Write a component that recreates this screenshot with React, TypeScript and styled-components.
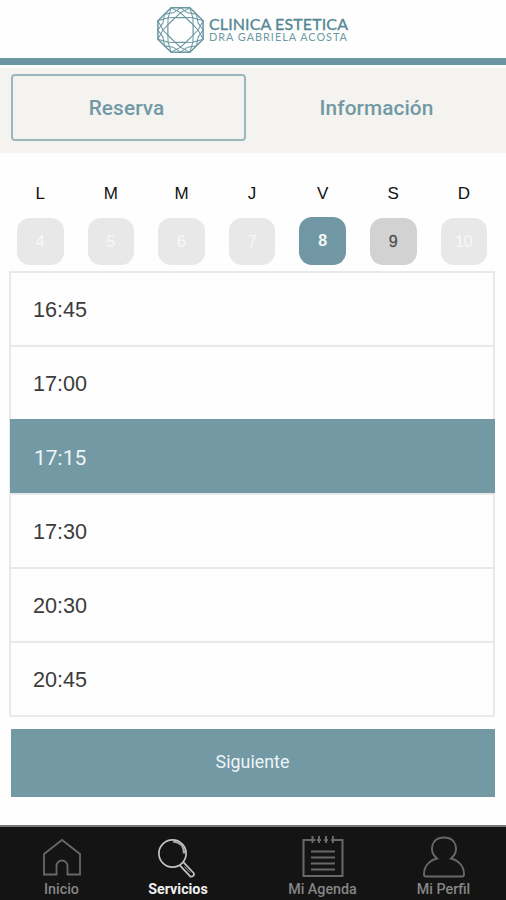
import React from 'react';
import styled, { createGlobalStyle, css } from 'styled-components';

const teal = '#7399a5';

const GlobalStyle = createGlobalStyle`
  * { box-sizing: border-box; }
  body { margin: 0; background: #fefefe; font-family: Roboto, "Liberation Sans", sans-serif; }
  button { font: inherit; padding: 0; border: 0; background: none; }
`;

const Screen = styled.div`
  width: 506px;
  height: 900px;
  display: flex;
  flex-direction: column;
  overflow: hidden;
`;

const Header = styled.header`
  height: 65px;
  flex: none;
  display: flex;
  align-items: flex-start;
  padding: 5px 0 0 155px;
  border-bottom: 7px solid #6c95a2;
  background: #fefefe;
`;

const Brand = styled.div`
  display: flex;
  flex-direction: column;
  padding: 11px 0 0 3px;
  font-family: Lato, sans-serif;
  color: #548895;
`;

const BrandName = styled.span`
  font-size: 16px;
  line-height: 16px;
  letter-spacing: 0.12px;
  -webkit-text-stroke: 0.35px;
  white-space: nowrap;
`;

const BrandOwner = styled.span`
  font-size: 10.9px;
  line-height: 9px;
  letter-spacing: 0.98px;
  white-space: nowrap;
  color: #6d99a4;
`;

const Tabs = styled.nav`
  height: 85px;
  flex: none;
  margin-top: 3px;
  padding: 6px 12px 12px 11px;
  display: grid;
  grid-template-columns: 235px 1fr;
  column-gap: 13px;
  background: #f4f3ef;
`;

const Tab = styled.button<{ $active?: boolean }>`
  border: 2px solid ${(p) => (p.$active ? '#9cb6bd' : 'transparent')};
  border-radius: 4px;
  color: #7199a5;
  font-size: 20.8px;
  font-weight: 500;
  letter-spacing: 0.1px;
  padding: 1px ${(p) => (p.$active ? 4 : 0)}px 0 0;
`;

const Week = styled.section`
  height: 118px;
  flex: none;
  display: grid;
  grid-template-columns: repeat(7, 70.6px);
  justify-items: center;
  align-content: start;
  padding: 29px 0 0 5px;
`;

const DayColumn = styled.div`
  display: flex;
  flex-direction: column;
  align-items: center;
`;

const DayLetter = styled.span`
  height: 24px;
  line-height: 24px;
  font-family: "Liberation Sans", sans-serif;
  font-size: 17px;
  color: #111;
`;

type DayState = 'disabled' | 'selected' | 'open';

const dayStyles = {
  disabled: css`background: #e8e8e8; color: #f8f8f8;`,
  open: css`background: #d2d2d2; color: #505050; -webkit-text-stroke: 0.3px;`,
  selected: css`
    background: #7097a3;
    color: #f1f7f9;
    height: 48px;
    margin-top: 11px;
    padding-bottom: 1px;
    font-weight: 700;
  `,
};

const DayTile = styled.button<{ $state: DayState }>`
  width: 46.5px;
  height: 46.5px;
  margin-top: 12px;
  padding-top: 1px;
  border-radius: 13px;
  font-family: "Liberation Sans", sans-serif;
  font-size: 16px;
  ${(p) => dayStyles[p.$state]}
`;

const Slots = styled.ul`
  list-style: none;
  margin: 0 11px 0 9px;
  padding: 0;
  flex: none;
  border-top: 2px solid #e9e9e9;
`;

const Slot = styled.li<{ $selected?: boolean }>`
  height: 74px;
  display: flex;
  align-items: center;
  padding: 2px 0 0 22px;
  border: 2px solid #e9e9e9;
  border-top: 0;
  color: #3c3c3c;
  font-family: "Liberation Sans", sans-serif;
  font-size: 21.6px;
  ${(p) =>
    p.$selected &&
    css`
      height: 76px;
      margin-top: -2px;
      border: 0;
      border-left: 1px solid #e9e9e9;
      border-bottom: 2px solid #e9e9e9;
      background: ${teal};
      background-clip: padding-box;
      color: #edf5f7;
      font-family: Roboto, sans-serif;
      font-size: 21px;
      padding: 3px 0 0 24px;
    `}
`;

const NextButton = styled.button`
  height: 68px;
  flex: none;
  margin: 12px 11px 0 11px;
  background: ${teal};
  color: #edf5f7;
  font-size: 17.8px;
  letter-spacing: 0.05px;
  padding: 0 1px 4px 0;
`;

const BottomBar = styled.nav`
  height: 75px;
  flex: none;
  margin-top: auto;
  display: grid;
  grid-template-columns: 123px 110px 179px 63px;
  border-top: 2px solid #777;
  background: #141414;
`;

const NavItem = styled.button<{ $active?: boolean }>`
  display: flex;
  flex-direction: column;
  align-items: center;
  justify-content: flex-start;
  padding-top: 9px;
  white-space: nowrap;
  font-size: 14.3px;
  line-height: 16px;
  color: ${(p) => (p.$active ? '#f0f0f0' : '#858585')};
  font-weight: ${(p) => (p.$active ? 700 : 500)};
  svg {
    flex: none;
    color: ${(p) => (p.$active ? '#c4c4c4' : '#686868')};
    margin-bottom: 3px;
    margin-right: ${(p) => (p.$active ? 3 : 0)}px;
  }
`;

const ring = (r: number, offset: number) =>
  Array.from({ length: 8 }, (_, i) => {
    const a = ((offset + i * 45) * Math.PI) / 180;
    return [25 + r * Math.cos(a), 25 + r * Math.sin(a)];
  });

const toPoints = (pts: number[][]) => pts.map((p) => p.map((n) => n.toFixed(2)).join(',')).join(' ');

function Gem() {
  const outer = ring(24, 22.5);
  const edge = ring(22.2, 0);
  const cross = ring(17.2, 0);
  const knot = ring(18.6, 22.5);
  const inner = ring(13.4, 22.5);
  return (
    <svg width="51" height="50" viewBox="0 0 50 50" preserveAspectRatio="none" fill="none" stroke="#6b98a3" strokeWidth="1">
      <polygon points={toPoints(outer)} strokeWidth="1.5" />
      <polygon points={toPoints(inner)} strokeWidth="1.2" />
      {cross.map((m, i) => (
        <g key={i}>
          <polyline points={toPoints([outer[(i + 7) % 8], m, outer[i]])} />
          <polyline points={toPoints([inner[(i + 7) % 8], m, inner[i]])} />
          <polyline points={toPoints([knot[(i + 7) % 8], edge[i], knot[i]])} />
        </g>
      ))}
    </svg>
  );
}

const HomeIcon = () => (
  <svg width="40" height="42" viewBox="0 0 40 42" fill="none" stroke="currentColor" strokeWidth="1.8">
    <path d="M2 18 20 4 38 18V38.500H25.500V30a5.500 5.500 0 0 0-11 0v8.500H2Z" />
  </svg>
);

const SearchIcon = () => (
  <svg width="40" height="42" viewBox="0 0 40 42" fill="none" stroke="currentColor" strokeWidth="1.7">
    <circle cx="15.500" cy="17.500" r="13.6" />
    <path d="M16 5.500c7 .5 11 5 11 12" strokeWidth="2.200" stroke="#aaa" />
    <path d="M22.800 29.300 33 40.200Q34.600 41.400 36.200 39.900T36.400 36.700L26.300 26.200" />
    <path d="m27.500 30.500 5.500 6" strokeWidth=".8" />
  </svg>
);

const AgendaIcon = () => (
  <svg width="42" height="42" viewBox="0 0 42 42" fill="none" stroke="currentColor" strokeWidth="2">
    <path d="M9 4H1.500v36h39V4H33M10.500 0v7M17 0v7M24 0v7M31 0v7M7.500 4h6M15 4h4M22 4h4M29 4h4M9 15.500h24M9 21.500h24M9 27.500h24M9 33.500h24" />
  </svg>
);

const ProfileIcon = () => (
  <svg width="42" height="42" viewBox="0 0 42 42" fill="none" stroke="currentColor" strokeWidth="1.9">
    <path d="M14 22.500C5.500 15.500 8 1.500 21 1.500S36.500 15.500 28 22.500C35.500 24.500 41 30 41 38.500Q41 40.500 39 40.500H3Q1 40.500 1 38.500C1 30 6.500 24.500 14 22.500Z" />
  </svg>
);

const days: { letter: string; date: number; state: DayState }[] = [
  { letter: 'L', date: 4, state: 'disabled' },
  { letter: 'M', date: 5, state: 'disabled' },
  { letter: 'M', date: 6, state: 'disabled' },
  { letter: 'J', date: 7, state: 'disabled' },
  { letter: 'V', date: 8, state: 'selected' },
  { letter: 'S', date: 9, state: 'open' },
  { letter: 'D', date: 10, state: 'disabled' },
];

const times = ['16:45', '17:00', '17:15', '17:30', '20:30', '20:45'];

const navItems = [
  { label: 'Inicio', Icon: HomeIcon },
  { label: 'Servicios', Icon: SearchIcon },
  { label: 'Mi Agenda', Icon: AgendaIcon },
  { label: 'Mi Perfil', Icon: ProfileIcon },
];

export default function App() {
  return (
    <Screen>
      <GlobalStyle />
      <Header>
        <Gem />
        <Brand>
          <BrandName>CLINICA ESTETICA</BrandName>
          <BrandOwner>DRA GABRIELA ACOSTA</BrandOwner>
        </Brand>
      </Header>
      <Tabs>
        <Tab $active>Reserva</Tab>
        <Tab>Información</Tab>
      </Tabs>
      <Week>
        {days.map((d) => (
          <DayColumn key={d.date}>
            <DayLetter>{d.letter}</DayLetter>
            <DayTile $state={d.state}>{d.date}</DayTile>
          </DayColumn>
        ))}
      </Week>
      <Slots>
        {times.map((t) => (
          <Slot key={t} $selected={t === '17:15'}>{t}</Slot>
        ))}
      </Slots>
      <NextButton>Siguiente</NextButton>
      <BottomBar>
        {navItems.map(({ label, Icon }) => (
          <NavItem key={label} $active={label === 'Servicios'}>
            <Icon />
            {label}
          </NavItem>
        ))}
      </BottomBar>
    </Screen>
  );
}
